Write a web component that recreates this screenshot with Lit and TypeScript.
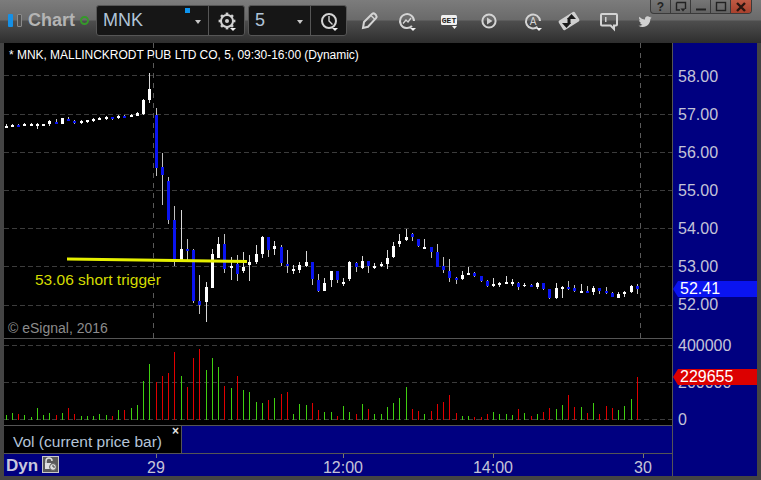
import { LitElement, html, css, svg } from "lit";
import { customElement } from "lit/decorators.js";

// [wickTop, bodyTop, bodyBottom, wickBottom, colour] in screen pixels; W = up, B = down
type C = [number, number, number, number, "W" | "B"];
const CANDLES: C[] = [
  [124,126,128,128,"W"],[124,125,127,127,"W"],[124,125,127,127,"B"],[123,124,126,126,"W"],[123,124,126,126,"W"],
  [123,124,126,129,"W"],[124,124,126,126,"W"],[120,121,124,126,"W"],[119,122,124,124,"B"],[118,118,124,124,"W"],
  [117,119,121,121,"B"],[120,121,123,124,"B"],[120,121,123,124,"W"],[120,120,122,123,"W"],[118,119,121,122,"W"],
  [117,118,120,120,"W"],[116,117,119,120,"W"],[117,117,119,120,"B"],[115,116,118,119,"W"],[115,116,118,118,"B"],
  [114,115,117,117,"W"],[112,113,116,116,"W"],[99,100,114,115,"W"],[73,89,100,103,"W"],[108,115,168,176,"B"],
  [153,167,175,205,"B"],[177,181,220,224,"B"],[206,220,261,266,"B"],[210,249,260,260,"W"],[239,249,251,260,"B"],
  [249,250,301,303,"B"],[275,301,305,314,"B"],[282,287,302,322,"W"],[249,254,288,288,"W"],[237,244,258,258,"W"],
  [234,244,269,273,"B"],[257,266,268,280,"W"],[255,264,274,281,"B"],[252,267,271,273,"W"],[255,262,265,281,"W"],
  [245,254,262,264,"W"],[236,237,254,258,"W"],[237,237,250,257,"B"],[241,246,249,255,"W"],[245,247,263,266,"B"],
  [250,264,266,273,"B"],[265,269,271,274,"W"],[262,265,270,273,"W"],[251,262,266,267,"W"],[262,262,279,285,"B"],
  [274,280,291,292,"B"],[278,283,291,291,"W"],[271,271,280,287,"W"],[271,271,280,283,"B"],[278,282,284,286,"W"],
  [261,262,279,281,"W"],[262,263,267,272,"B"],[256,261,268,269,"W"],[261,261,266,273,"B"],[263,266,268,269,"W"],
  [262,264,266,267,"W"],[250,258,264,269,"W"],[242,246,257,258,"W"],[234,241,244,247,"W"],[229,237,240,241,"W"],
  [233,234,237,241,"B"],[239,239,246,247,"B"],[239,247,249,249,"W"],[247,247,252,258,"B"],[244,252,267,267,"B"],
  [257,266,270,273,"B"],[259,271,278,282,"B"],[277,278,280,284,"B"],[271,275,279,280,"W"],[267,273,275,275,"W"],
  [272,273,276,277,"B"],[276,276,281,282,"B"],[280,281,286,287,"B"],[278,284,286,287,"W"],[282,283,285,287,"W"],
  [276,282,284,284,"W"],[279,282,284,286,"W"],[282,283,287,290,"B"],[283,285,286,287,"W"],[284,285,287,287,"B"],
  [282,283,287,289,"W"],[283,283,289,290,"B"],[289,289,298,299,"B"],[283,288,298,299,"W"],[286,287,289,298,"W"],
  [281,287,289,290,"B"],[285,288,291,292,"B"],[284,291,293,293,"W"],[286,291,293,293,"B"],[286,288,292,295,"W"],
  [288,288,291,294,"B"],[287,291,293,294,"B"],[292,293,297,297,"B"],[292,294,298,298,"W"],[291,292,294,297,"W"],
  [285,286,292,293,"W"],[284,286,289,294,"B"],
];

// [zoomed top, colour] — one entry per bar
const V: [number, "G" | "R"][] = [
  [240,"G"],[234,"G"],[237,"R"],[240,"G"],[246,"G"],[219,"G"],[240,"G"],[234,"G"],[240,"R"],[234,"G"],
  [219,"R"],[237,"R"],[243,"G"],[243,"G"],[243,"G"],[237,"G"],[240,"G"],[243,"R"],[225,"G"],[225,"R"],
  [219,"G"],[210,"G"],[138,"G"],[87,"G"],[142,"R"],[123,"R"],[114,"R"],[51,"R"],[123,"G"],[156,"R"],
  [69,"R"],[42,"R"],[105,"G"],[69,"G"],[96,"G"],[153,"R"],[159,"G"],[123,"R"],[165,"G"],[171,"G"],
  [201,"G"],[204,"G"],[195,"R"],[189,"G"],[177,"R"],[171,"R"],[237,"G"],[207,"G"],[210,"G"],[204,"R"],
  [225,"R"],[231,"G"],[231,"G"],[243,"R"],[213,"G"],[231,"G"],[237,"R"],[207,"G"],[222,"R"],[237,"G"],
  [237,"G"],[216,"G"],[204,"G"],[189,"G"],[156,"G"],[222,"R"],[228,"R"],[237,"G"],[228,"R"],[207,"R"],
  [201,"R"],[180,"R"],[234,"R"],[243,"G"],[243,"G"],[246,"R"],[246,"R"],[237,"R"],[231,"G"],[237,"G"],
  [237,"G"],[240,"G"],[222,"R"],[234,"G"],[243,"R"],[237,"G"],[231,"R"],[219,"R"],[222,"G"],[210,"G"],
  [180,"R"],[216,"R"],[216,"G"],[234,"R"],[204,"G"],[237,"R"],[213,"R"],[219,"R"],[225,"G"],[213,"G"],
  [192,"G"],[126,"R"],
];

const barX = (i: number) => Math.floor(6 + 6.25 * i);
const PRICE_GRID = [75, 114, 152, 190, 228, 266, 305];
const VOL_GRID = [345, 382, 419];
const PRICES = ["58.00", "57.00", "56.00", "55.00", "54.00", "53.00", "52.00"];
const VOLS = ["400000", "200000", "0"];
const TICKS: [number, string][] = [[156, "29"], [343, "12:00"], [493, "14:00"], [643, "30"]];

const caret = svg`<polygon class="f-w" points="15,19 21,19 18,22"></polygon>`;

const ICONS = [
  ["g0", svg`<path class="s" d="M6 19 L7 13 L15 5 Q16.5 3.8 18 5 L19 6.2 Q20.2 7.8 19 9.2 L11 17.8 Z"></path><path class="s1" d="M14 6.5 L17.8 10.2"></path>`],
  ["g14", svg`<path class="s" d="M17 17 A7 7 0 1 1 19 12"></path><path class="s1" d="M8 14.5 L11 11 L13 13 L16 9"></path>${caret}`],
  ["g18", svg`<rect class="f-w" x="4" y="6" width="16" height="10" rx="1.5"></rect><text class="get" x="12" y="14" text-anchor="middle">GET</text><polygon class="f-w" points="15,17 20,17 17.5,20"></polygon>`],
  ["g16", svg`<circle class="s" cx="12" cy="12" r="6.6"></circle><polygon class="f-l" points="10,8.5 15.5,12 10,15.5"></polygon>`],
  ["g20", svg`<path class="s" d="M16.5 17.8 A7 7 0 1 1 19 12"></path><text class="a" x="12" y="16" text-anchor="middle">A</text>${caret}`],
  ["g12", svg`<g transform="rotate(-32 12 12)"><rect class="f-l" x="2.5" y="6.5" width="19" height="11" rx="1.5"></rect></g><polygon class="arrow" points="14.5,5 19,10 10,10"></polygon><polygon class="arrow" points="9.5,19 5,14 14,14"></polygon><rect class="arrow" x="10.5" y="9" width="3" height="6"></rect>`],
  ["g16", svg`<path class="s" d="M5 5 H19 Q20 5 20 6 V15.5 Q20 16.5 19 16.5 H17 V20 L13.6 16.5 H5 Q4 16.5 4 15.5 V6 Q4 5 5 5 Z"></path><rect class="f-l" x="8" y="8" width="1.5" height="5"></rect>`],
  ["g12", svg`<g transform="translate(5.5 6) scale(0.55)"><path class="f-l" d="M23.953 4.57a10 10 0 01-2.825.775 4.958 4.958 0 002.163-2.723c-.951.555-2.005.959-3.127 1.184a4.92 4.92 0 00-8.384 4.482C7.69 8.095 4.067 6.13 1.64 3.162a4.822 4.822 0 00-.666 2.475c0 1.71.87 3.213 2.188 4.096a4.904 4.904 0 01-2.228-.616v.06a4.923 4.923 0 003.946 4.827 4.996 4.996 0 01-2.212.085 4.936 4.936 0 004.604 3.417 9.867 9.867 0 01-6.102 2.105c-.39 0-.779-.023-1.17-.067a13.995 13.995 0 007.557 2.209c9.053 0 13.998-7.496 13.998-13.985 0-.21 0-.42-.015-.63A9.935 9.935 0 0024 4.59z"></path></g>`],
] as const;

const gear = svg`<circle class="s" cx="12" cy="12" r="6"></circle><circle class="f-l" cx="12" cy="12" r="2"></circle>
  ${[0, 45, 90, 135, 180, 225, 270, 315].map((a) => svg`<rect class="f-l" x="10.7" y="3.6" width="2.6" height="2.6" transform="rotate(${a} 12 12)"></rect>`)}${caret}`;
const clock = svg`<circle class="s" cx="12" cy="12" r="7"></circle><path class="s1" d="M12 7 V12 L15.5 15.5"></path>${caret}`;

@customElement("app-root")
export class AppRoot extends LitElement {
  static styles = css`
    :host { display: block; width: 761px; height: 480px; font-family: "Liberation Sans", Arial, sans-serif; }
    .window { position: relative; width: 761px; height: 480px; background: #444; display: flex; flex-direction: column; overflow: hidden; }
    .titlebar { height: 43px; display: flex; align-items: flex-start; flex: none;
      background: linear-gradient(#7c7c7c 0, #6a6a6a 20px, #4e4e4e 21px, #2e2e2e 43px); }
    .logo { display: flex; gap: 4px; margin: 14px 0 0 8px; }
    .bar { width: 5px; height: 13px; box-sizing: border-box; border-radius: 1px; }
    .bar.on { background: #1590e6; }
    .bar.off { border: 1px solid #8a8a8a; background: #505050; }
    .name { margin: 10px 0 0 6px; width: 44px; font-size: 18px; line-height: 21px; font-weight: bold; color: #b4b4b4; }
    .ring { width: 9px; height: 9px; box-sizing: border-box; border: 2px solid #35992a; border-radius: 50%; margin: 16px 0 0 8px; }
    .combo { display: flex; height: 31px; margin-top: 5px; box-sizing: border-box; background: #161616;
      border: 1px solid #565656; border-radius: 3px; color: #b0c4d8; font-size: 18px; line-height: 29px; }
    .combo.sym { margin-left: 7px; width: 149px; }
    .combo.per { margin-left: 3px; width: 99px; }
    .field { position: relative; box-sizing: border-box; padding-left: 6px; border-right: 1px solid #565656; }
    .sym .field { width: 112px; }
    .per .field { width: 62px; }
    .field::after { content: ""; position: absolute; right: 7px; top: 14px; border: 3.5px solid transparent; border-top: 4px solid #c8c8c8; border-bottom: 0; }
    .flag { position: absolute; left: 88px; top: 2px; width: 5px; height: 5px; background: #0d95f0; }
    .combo svg { margin: 3px 0 0 6px; }
    .tools { display: flex; margin: 9px 0 0 10px; }
    svg.ic { width: 24px; height: 24px; flex: none; display: block; }
    .g0 { margin-left: 0; } .g12 { margin-left: 12px; } .g14 { margin-left: 14px; }
    .g16 { margin-left: 16px; } .g18 { margin-left: 18px; } .g20 { margin-left: 20px; }
    .s { fill: none; stroke: #d4d4d4; stroke-width: 2; }
    .s1 { fill: none; stroke: #d4d4d4; stroke-width: 1.4; }
    .f-l { fill: #d0d0d0; }
    .f-w { fill: #f0f0f0; }
    .arrow { fill: #1a1a1a; }
    .get { font: bold 8px "Liberation Mono", monospace; fill: #222; }
    .a { font: 10px "Liberation Sans", sans-serif; fill: #d4d4d4; }
    .winbtns { position: absolute; right: 9px; top: 0; display: flex; height: 14px; box-sizing: border-box;
      border: 1px solid #3a3a3a; border-top: 0; border-radius: 0 0 4px 4px; overflow: hidden;
      background: linear-gradient(#767676, #646464); }
    .wb { width: 20px; box-sizing: border-box; border-right: 1px solid #3a3a3a; display: flex; align-items: center; justify-content: center;
      font-size: 12px; font-weight: bold; color: #222; }
    .wb:last-child { border-right: 0; background: linear-gradient(#c05a44, #a8402c); }
    .wb svg { width: 14px; height: 12px; display: block; }
    .body { flex: 1; display: flex; padding: 0 4px 4px; min-height: 0; }
    .left { width: 669px; flex: none; display: flex; flex-direction: column; border-right: 1px solid #555; box-sizing: border-box; }
    .pane { display: block; background: #000; flex: none; }
    .sep { height: 1px; background: #555; flex: none; }
    .sep2 { height: 1px; background: #555; flex: none; }
    .label-row { display: flex; height: 27px; flex: none; }
    .label { position: relative; width: 178px; box-sizing: border-box; background: #000; padding: 5px 0 0 9px; color: #b4c4d8; font-size: 15.5px; line-height: 22px; border-right: 1px solid #555; }
    .close { position: absolute; right: 2px; top: -2px; font-size: 12px; line-height: 14px; font-weight: bold; color: #e0e0e0; }
    .navy { flex: 1; background: #000080; }
    .footer { position: relative; flex: 1; background: #000080; display: flex; align-items: flex-start; }
    .footer svg.axis { position: absolute; inset: 0; width: 100%; height: 100%; }
    .dyn { position: relative; margin: 2px 0 0 2px; font-size: 17px; line-height: 20px; font-weight: bold; color: #c8c8dc; }
    .lock { position: relative; margin: 2px 0 0 4px; width: 17px; height: 17px; display: block; }
    .axis-right { position: relative; flex: 1; background: #000080; color: #c4c4d8; font-size: 16px; padding-left: 5px; box-sizing: border-box; }
    .prices { padding-top: 14.5px; }
    .prices div { height: 38.17px; line-height: 38.17px; }
    .vols { margin-top: 2.5px; }
    .vols div { height: 37.2px; line-height: 37.2px; }
    .tag { position: absolute; left: 0; right: 0; height: 16px; line-height: 16px; color: #fff; box-sizing: border-box;
      clip-path: polygon(0 50%, 5px 0, 100% 0, 100% 100%, 5px 100%); padding-left: 7px; }
    .tag.price { top: 238px; background: #0a14f0; }
    .tag.vol { top: 326px; background: #dc0000; }
    .g-h { stroke: #3c3c3c; stroke-width: 1; stroke-dasharray: 5 3; }
    .g-v { stroke: #5a5a5a; stroke-width: 1; stroke-dasharray: 5 5; }
    .wick-W { fill: #d8d8d8; } .wick-B { fill: #c0c0c0; }
    .body-W { fill: #fff; } .body-B { fill: #0a14f0; }
    .vol-G { fill: #3fd010; } .vol-R { fill: #e00000; }
    .trend { stroke: #e6f000; stroke-width: 3; }
    .chart-title { font: 12px "Liberation Sans", sans-serif; fill: #fff; letter-spacing: -0.035px; }
    .trigger { font: 15.5px "Liberation Sans", sans-serif; fill: #d4dc00; }
    .copy { font: 14px "Liberation Sans", sans-serif; fill: #8c8c8c; }
    .tick { stroke: #777; }
    .tick-label { font: 16px "Liberation Sans", sans-serif; fill: #c4c4d8; }
  `;

  render() {
    return html`
      <div class="window">
        <div class="titlebar">
          <div class="logo"><span class="bar on"></span><span class="bar off"></span></div>
          <div class="name">Chart</div>
          <div class="ring"></div>
          <div class="combo sym">
            <div class="field">MNK<span class="flag"></span></div>
            <svg class="ic" viewBox="0 0 24 24">${gear}</svg>
          </div>
          <div class="combo per">
            <div class="field">5</div>
            <svg class="ic" viewBox="0 0 24 24">${clock}</svg>
          </div>
          <div class="tools">
            ${ICONS.map(([g, p]) => html`<svg class="ic ${g}" viewBox="0 0 24 24">${p}</svg>`)}
          </div>
        </div>
        <div class="winbtns">
          <div class="wb">?</div>
          <div class="wb"><svg viewBox="0 0 14 12"><path d="M2.5 1.5H11.5V8" fill="none" stroke="#222" stroke-width="1.4"></path><path d="M2.5 1.5V9H6" fill="none" stroke="#222" stroke-width="1.4"></path><polygon points="6.5,7.5 11.5,7.5 9,10.5" fill="#222"></polygon></svg></div>
          <div class="wb"><svg viewBox="0 0 14 12"><rect x="2" y="7.5" width="10" height="2" fill="#222"></rect></svg></div>
          <div class="wb"><svg viewBox="0 0 14 12"><rect x="2.5" y="1.5" width="9" height="8" fill="none" stroke="#222" stroke-width="1.4"></rect></svg></div>
          <div class="wb"><svg viewBox="0 0 14 12"><path d="M3 2 L11 10 M11 2 L3 10" stroke="#2a1510" stroke-width="2.4"></path></svg></div>
        </div>
        <div class="body">
          <div class="left">
            ${this.pricePane()}
            <div class="sep"></div>
            ${this.volPane()}
            <div class="sep2"></div>
            <div class="label-row">
              <div class="label">Vol (current price bar)<span class="close">×</span></div>
              <div class="navy"></div>
            </div>
            <div class="sep2"></div>
            <div class="footer">
              <svg class="axis" viewBox="4 454 668 22">
                ${TICKS.map(([x, t]) => svg`
                  <line class="tick" x1=${x + 0.5} x2=${x + 0.5} y1="454" y2="458"></line>
                  <text class="tick-label" x=${x} y="473" text-anchor="middle">${t}</text>`)}
              </svg>
              <span class="dyn">Dyn</span>
              <svg class="lock" viewBox="0 0 17 17">
                <rect x="0.5" y="0.5" width="16" height="16" fill="#5a5a5a" stroke="#c8c8c8"></rect>
                <path d="M4 8 V5 A3 3 0 0 1 10 5" fill="none" stroke="#e0e0e0" stroke-width="1.5"></path>
                <rect x="3" y="7" width="6" height="6" fill="#e0e0e0"></rect>
                <circle cx="11" cy="11" r="3.4" fill="#e0e0e0" stroke="#5a5a5a"></circle>
                <path d="M11 9 V11 H13" fill="none" stroke="#444" stroke-width="1"></path>
              </svg>
            </div>
          </div>
          <div class="axis-right">
            <div class="prices">${PRICES.map((p) => html`<div>${p}</div>`)}</div>
            <div class="vols">${VOLS.map((v) => html`<div>${v}</div>`)}</div>
            <div class="tag price">52.41</div>
            <div class="tag vol">229655</div>
          </div>
        </div>
      </div>
    `;
  }

  private pricePane() {
    return html`<svg class="pane" width="668" height="295" viewBox="4 43 668 295" shape-rendering="crispEdges">
      ${PRICE_GRID.map((y) => svg`<line class="g-h" x1="4" x2="672" y1=${y + 0.5} y2=${y + 0.5}></line>`)}
      ${[153, 640].map((x) => svg`<line class="g-v" x1=${x + 0.5} x2=${x + 0.5} y1="43" y2="338"></line>`)}
      ${CANDLES.map(([wt, bt, bb, wb, c], i) => {
        const x = barX(i);
        return svg`<rect class="wick-${c}" x=${x} y=${wt} width="1" height=${wb - wt}></rect>
          <rect class="body-${c}" x=${x - 1} y=${bt} width="3" height=${bb - bt}></rect>`;
      })}
      <line class="trend" x1="67" y1="259" x2="247" y2="261.5" shape-rendering="auto"></line>
      <text class="chart-title" x="9" y="59" shape-rendering="auto">* MNK, MALLINCKRODT PUB LTD CO, 5, 09:30-16:00 (Dynamic)</text>
      <text class="trigger" x="35" y="285">53.06 short trigger</text>
      <text class="copy" x="8" y="333">© eSignal, 2016</text>
    </svg>`;
  }

  private volPane() {
    return html`<svg class="pane" width="668" height="86" viewBox="4 339 668 86" shape-rendering="crispEdges">
      ${VOL_GRID.map((y) => svg`<line class="g-h" x1="4" x2="672" y1=${y + 0.5} y2=${y + 0.5}></line>`)}
      ${V.map(([t, c], i) => {
        const top = Math.round(335 + t / 3);
        return svg`<rect class="vol-${c}" x=${barX(i)} y=${top} width="1" height=${420 - top}></rect>`;
      })}
    </svg>`;
  }
}
